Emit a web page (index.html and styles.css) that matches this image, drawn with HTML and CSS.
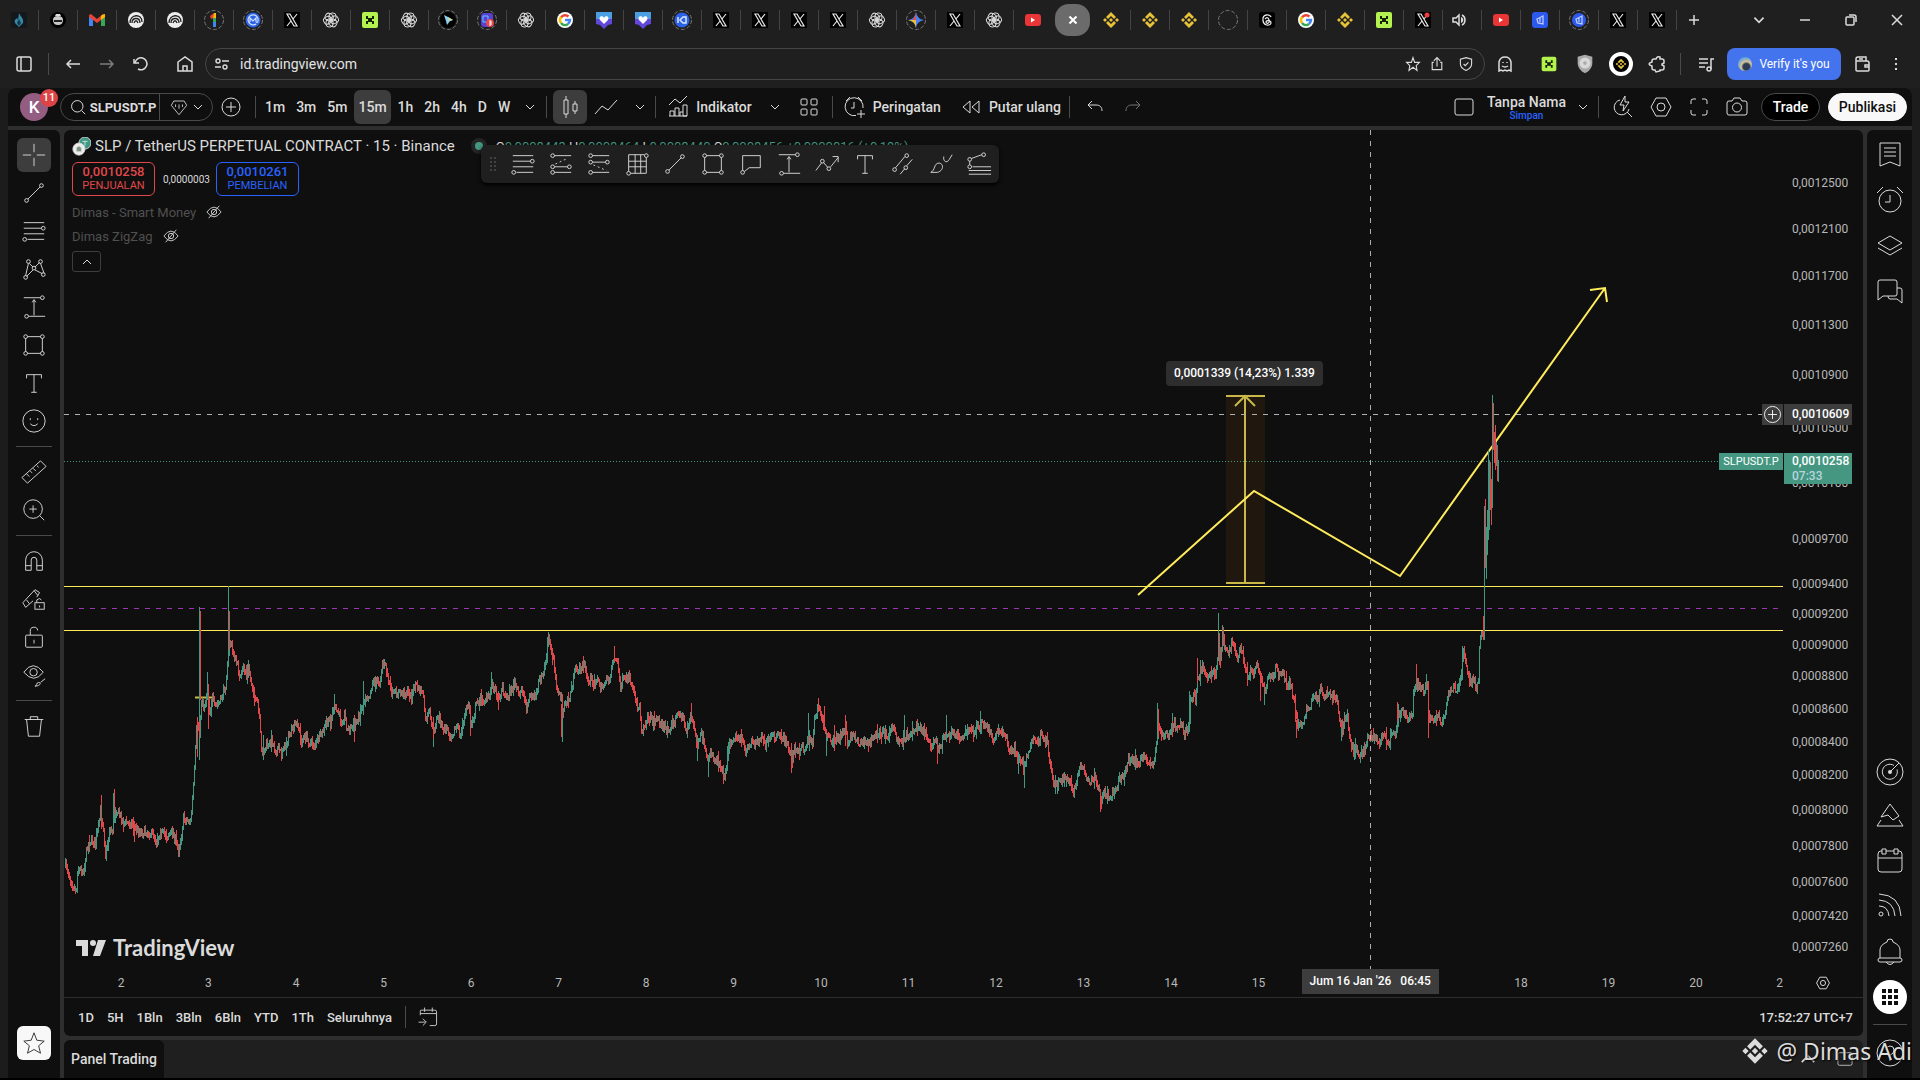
FILE: index.html
```html
<!DOCTYPE html>
<html lang="id">
<head>
  <meta charset="UTF-8">
  <meta name="viewport" content="width=device-width, initial-scale=1.0">
  <title>SLPUSDT.P - TradingView</title>
  <link rel="stylesheet" href="styles.css">
</head>
<body>

  <!-- Icon library -->
  <svg class="icon-library" aria-hidden="true">
    <!-- Tab icons, 24x24 -->
    <symbol id="flame" viewBox="0 0 24 24"><rect x="4" y="4" width="16" height="16" fill="#15181b"/><path d="M12 5c1 3 5 5 4 10l-4 4-4-4c-1-3 1-4 2-5l1 2z" fill="#3487a5"/><path d="M12 11l2 4-2 3-2-3z" fill="#14384c"/></symbol>
    <symbol id="robot" viewBox="0 0 24 24"><circle cx="12" cy="12" r="8" fill="#000"/><path d="M7 12q0-4 5-4t5 4q0 5-5 5t-5-5" fill="#c9c9c9"/><path d="M8 12h8v2H8z" fill="#222"/><path d="M9 8l1-2h4l1 2z" fill="#ddd"/></symbol>
    <symbol id="gmail" viewBox="0 0 24 24"><path d="M4 8v10h4v-7z" fill="#4285f4"/><path d="M20 8v10h-4v-7z" fill="#34a853"/><path d="M4 7l2-1 6 5 6-5 2 1v2l-8 6-8-6z" fill="#ea4335"/><path d="M17 7l3-1v3l-4 3V8z" fill="#fbbc04"/></symbol>
    <symbol id="arcs" viewBox="0 0 24 24"><circle cx="12" cy="12" r="8" fill="#eee"/><path d="M6 15c0-9 12-10 12-1M8 15c0-6 8-6 8 0M10 15c1-3 3-3 4 0" fill="none" stroke="#222" stroke-width="1.3"/></symbol>
    <symbol id="ring" viewBox="0 0 24 24"><circle cx="12" cy="12" r="9.500" fill="none" stroke="#777" stroke-dasharray="4 2"/></symbol>
    <symbol id="one" viewBox="0 0 24 24"><use href="#ring"/><path d="M8 8l4-3v5l-3 1z" fill="#ea4335"/><path d="M12 5h2v6h-3z" fill="#fbbc04"/><path d="M11 10h3v4h-3z" fill="#34a853"/><path d="M11 14h3v5h-3z" fill="#4285f4"/></symbol>
    <symbol id="cmc" viewBox="0 0 24 24"><use href="#ring"/><circle cx="12" cy="12" r="7.500" fill="#2e63e8"/><path d="M9 14v-4l3 3 3-3v3c0 2 2 2 2 0a5 5 0 1 0-2 3" fill="none" stroke="#cfe0ff" stroke-width="1.200"/></symbol>
    <symbol id="x" viewBox="0 0 24 24"><rect x="4" y="4" width="16" height="16" fill="#000"/><path d="M7 6h3l7 12h-3zM17 6l-4 5M7 18l4-5" fill="none" stroke="#e8e8e8" stroke-width="1.200"/></symbol>
    <symbol id="x-live" viewBox="0 0 24 24"><use href="#x"/><circle cx="16" cy="7" r="2.500" fill="#ef3b3b"/></symbol>
    <symbol id="petal" viewBox="0 0 24 24"><rect x="10" y="5" width="7" height="8" rx="3" fill="none" stroke="#d8d8d8"/></symbol>
    <symbol id="openai" viewBox="0 0 24 24"><use href="#petal"/><use href="#petal" transform="rotate(60 12 12)"/><use href="#petal" transform="rotate(120 12 12)"/><use href="#petal" transform="rotate(180 12 12)"/><use href="#petal" transform="rotate(240 12 12)"/><use href="#petal" transform="rotate(300 12 12)"/></symbol>
    <symbol id="greenx" viewBox="0 0 24 24"><rect x="4" y="4" width="16" height="16" rx="2" fill="#b4f34f"/><path d="M8 8h2v2h4V8h2v3h-2v2h2v3h-2v-2h-4v2H8v-3h2v-2H8z" fill="#16210a"/></symbol>
    <symbol id="star4" viewBox="0 0 24 24"><use href="#ring"/><circle cx="12" cy="12" r="8" fill="#000"/><path d="M8 7l4 2 5 3-3 1-3 4-1-4z" fill="#8ad0ee"/><path d="M12 9l5 3-4 1z" fill="#d3dc9a"/></symbol>
    <symbol id="badge3" viewBox="0 0 24 24"><use href="#ring"/><rect x="6" y="5" width="12" height="14" rx="3" fill="#5a3fd0"/><path d="M8 8h5v6H8z" fill="none" stroke="#59d0ff"/><circle cx="15" cy="15" r="4" fill="#e5484d"/><path d="M14 13h2v4h-2M14 15h2" fill="none" stroke="#fff"/></symbol>
    <symbol id="google" viewBox="0 0 24 24"><circle cx="12" cy="12" r="8" fill="#fff"/><g fill="none" stroke-width="2.500"><path d="M8 9.500A5 5 0 0 1 15.500 8.500" stroke="#ea4335"/><path d="M8 9a5 5 0 0 0 0 6" stroke="#fbbc04"/><path d="M8 15a5 5 0 0 0 7 1" stroke="#34a853"/><path d="M12 12h5c0 2-1 3-2 4" stroke="#4285f4"/></g></symbol>
    <symbol id="heart" viewBox="0 0 24 24"><path d="M4 6h16v10l-4 1-4 4-4-4-4-1z" fill="#6247dc"/><path d="M4 4h16v7H4z" fill="#4b9ee0"/><path d="M12 16l-4-4c-2-4 3-5 4-2 1-3 6-2 4 2z" fill="#fff"/></symbol>
    <symbol id="cam" viewBox="0 0 24 24"><use href="#ring"/><circle cx="12" cy="12" r="7.500" fill="#2c62e8"/><path d="M8 9v6M10 12l3-3h3v6h-3z" fill="none" stroke="#dbe6ff" stroke-width="1.500"/></symbol>
    <symbol id="gemini" viewBox="0 0 24 24"><use href="#ring"/><path d="M12 4q1 7 8 8-7 1-8 8-1-7-8-8 7-1 8-8" fill="#4c82ef"/><path d="M12 4v8H9q3-4 3-8" fill="#e6493f"/><path d="M4 12h8v8q-1-7-8-8" fill="#e7bd3b"/></symbol>
    <symbol id="youtube" viewBox="0 0 24 24"><rect x="4" y="6" width="16" height="12" rx="3" fill="#e93535"/><path d="M10 9.500v5l4-2.500z" fill="#fff"/></symbol>
    <symbol id="binance" viewBox="0 0 24 24"><path d="M12 4l5 5-2 2-3-3-3 3-2-2zM12 20l5-5-2-2-3 3-3-3-2 2zM6 10l2 2-2 2-2-2zM18 10l2 2-2 2-2-2zM12 10l2 2-2 2-2-2z" fill="currentColor"/></symbol>
    <symbol id="threads" viewBox="0 0 24 24"><rect x="4" y="4" width="16" height="16" rx="3" fill="#000"/><path d="M16 9c-1-3-7-3-8 1-1 9 8 8 8 5s-5-3-5-1 4 2 3-2-3-2-4-1" fill="none" stroke="#eee" stroke-width="1.200"/></symbol>
    <symbol id="audio" viewBox="0 0 24 24"><path d="M3 10h3l3-3v10l-3-3H3z" fill="none" stroke="#ddd" stroke-width="1.500"/><path d="M11 9v6c3-1 3-5 0-6" fill="#ddd"/><path d="M12 7c4 2 4 8 0 10" fill="none" stroke="#ddd" stroke-width="1.500"/></symbol>
    <symbol id="bluesq" viewBox="0 0 24 24"><rect x="4" y="4" width="16" height="16" rx="3" fill="#2d58ec"/><path d="M15 8l-6 3 1 4 5 1zM12 10v4" fill="none" stroke="#b9caff" stroke-width="1.300"/></symbol>
    <symbol id="bluecirc" viewBox="0 0 24 24"><use href="#ring"/><circle cx="12" cy="12" r="7" fill="#2d58ec"/><path d="M15 8l-6 3 1 4 5 1zM12 10v4" fill="none" stroke="#b9caff" stroke-width="1.300"/></symbol>

    <!-- Line icons, 28x28 -->
    <symbol id="chev" viewBox="0 0 14 14"><path d="M3 5l4 4 4-4"/></symbol>
    <symbol id="chev-up" viewBox="0 0 14 14"><path d="M3 9l4-4 4 4"/></symbol>
    <symbol id="search" viewBox="0 0 28 28"><circle cx="13" cy="13" r="8"/><path d="M19 19l5 5"/></symbol>
    <symbol id="gem" viewBox="0 0 28 28"><path d="M8 7h12l3 5-9 11-9-11zM10 11v3M14 11v5M18 11v3"/></symbol>
    <symbol id="plus-circle" viewBox="0 0 28 28"><circle cx="14" cy="14" r="9"/><path d="M14 9v10M9 14h10"/></symbol>
    <symbol id="candles" viewBox="0 0 28 28"><path d="M8 7h4v14H8zM10 3v4M10 21v4M17 11h4v7h-4zM19 8v3M19 18v3"/></symbol>
    <symbol id="line" viewBox="0 0 28 28"><path d="M3 21l7-8 6 4 9-10"/></symbol>
    <symbol id="indicator" viewBox="0 0 28 28"><path d="M5 12l6-6 5 4 7-7M6 23v-5h4v5M11 23v-8h4v8M16 23v-4h3M19 23V12h4v11zM5 23h18"/></symbol>
    <symbol id="layouts" viewBox="0 0 28 28"><rect x="6" y="6" width="6" height="6" rx="1"/><rect x="16" y="6" width="6" height="6" rx="1"/><rect x="6" y="16" width="6" height="6" rx="1"/><rect x="16" y="16" width="6" height="6" rx="1"/></symbol>
    <symbol id="alarm-plus" viewBox="0 0 28 28"><path d="M15 22.500A9 9 0 1 1 22 15M13 9v6h-3M5 8l4-4M17 4l4 4M20 17v8M16 21h8"/></symbol>
    <symbol id="rewind" viewBox="0 0 28 28"><path d="M13 8v12l-7-6zM22 8v12l-7-6z"/></symbol>
    <symbol id="undo" viewBox="0 0 28 28"><path d="M11 8l-4 4 4 4M7 12h8c4 0 6 2 6 6"/></symbol>
    <symbol id="redo" viewBox="0 0 28 28"><path d="M17 8l4 4-4 4M21 12h-8c-4 0-6 2-6 6"/></symbol>
    <symbol id="square" viewBox="0 0 28 28"><rect x="5" y="6" width="18" height="16" rx="2"/></symbol>
    <symbol id="flash" viewBox="0 0 28 28"><path d="M11 7a7.500 7.500 0 1 0 9 9M18 19l5 5M16 3l-5 9h4l-1 6 6-9h-4z"/></symbol>
    <symbol id="hexagon" viewBox="0 0 28 28"><path d="M9 5h10l5 9-5 9H9l-5-9z"/><circle cx="14" cy="14" r="4"/></symbol>
    <symbol id="full" viewBox="0 0 28 28"><path d="M6 11V8q0-2 2-2h3M17 6h3q2 0 2 2v3M22 17v3q0 2-2 2h-3M11 22H8q-2 0-2-2v-3"/></symbol>
    <symbol id="camera" viewBox="0 0 28 28"><path d="M6 8h3l2-3h6l2 3h3q2 0 2 2v10q0 2-2 2H6q-2 0-2-2V10q0-2 2-2z"/><circle cx="14" cy="14.500" r="4.500"/></symbol>
    <symbol id="cross" viewBox="0 0 28 28"><path d="M14 2v9M14 17v9M2 14h9M17 14h9"/></symbol>
    <symbol id="trend" viewBox="0 0 28 28"><path d="M7.500 20.500l13-13"/><circle cx="6" cy="22" r="2"/><circle cx="22" cy="6" r="2"/></symbol>
    <symbol id="fib" viewBox="0 0 28 28"><path d="M3 5h22M3 11h19M3 17h22M7 23h18"/><circle cx="24" cy="11" r="2"/><circle cx="4" cy="23" r="2"/></symbol>
    <symbol id="fib-ext" viewBox="0 0 28 28"><path d="M7 5h18M7 17h14M7 23h18"/><path d="M8 14l13-6" stroke-dasharray="2 3"/><circle cx="5" cy="5" r="2"/><circle cx="5" cy="17" r="2"/><circle cx="23" cy="17" r="2"/><circle cx="5" cy="23" r="2"/></symbol>
    <symbol id="fib-ret" viewBox="0 0 28 28"><path d="M7 5h18M7 12h14M7 23h18"/><path d="M8 15l14 6" stroke-dasharray="2 3"/><circle cx="5" cy="5" r="2"/><circle cx="5" cy="12" r="2"/><circle cx="23" cy="12" r="2"/><circle cx="5" cy="23" r="2"/></symbol>
    <symbol id="grid" viewBox="0 0 28 28"><path d="M5 22V4h17M12 4v20M18 4v20M24 7v17H7M5 11h19M5 17h19"/><circle cx="24" cy="5" r="2"/><circle cx="5" cy="24" r="2"/></symbol>
    <symbol id="pattern" viewBox="0 0 28 28"><path d="M5 21L8 8M9 8l4 4M15 12l5-5M21 8l4 11M6 22l7-7M15 15l8 4"/><circle cx="5" cy="23" r="2"/><circle cx="8" cy="6" r="2"/><circle cx="14" cy="13" r="2"/><circle cx="21" cy="6" r="2"/><circle cx="24" cy="20" r="2"/></symbol>
    <symbol id="range" viewBox="0 0 28 28"><path d="M3 4h18M8 24h18M14 23V7M12 9l2-3 2 3"/><circle cx="23" cy="4" r="2"/><circle cx="6" cy="24" r="2"/></symbol>
    <symbol id="rect" viewBox="0 0 28 28"><path d="M7 5h14M7 23h14M5 7v14M23 7v14"/><circle cx="5" cy="5" r="2"/><circle cx="23" cy="5" r="2"/><circle cx="5" cy="23" r="2"/><circle cx="23" cy="23" r="2"/></symbol>
    <symbol id="note" viewBox="0 0 28 28"><path d="M5 21V5h19v13H12l-5 4"/><circle cx="5" cy="23" r="2"/></symbol>
    <symbol id="zig" viewBox="0 0 28 28"><path d="M2 21l6-8M10 12l5 6M18 17l8-10M20 6h6v6"/><circle cx="9" cy="11" r="2"/><circle cx="16" cy="19" r="2"/></symbol>
    <symbol id="text" viewBox="0 0 28 28"><path d="M6 9V5h16v4M14 5v19M11 24h6"/></symbol>
    <symbol id="smile" viewBox="0 0 28 28"><circle cx="14" cy="14" r="12"/><path d="M10 17q4 4 8 0M10 11v2M18 11v2"/></symbol>
    <symbol id="channel" viewBox="0 0 28 28"><path d="M6 18L16 6M11 25l5-6M18 16l6-7"/><circle cx="5" cy="20" r="2"/><circle cx="18" cy="5" r="2"/><circle cx="17" cy="18" r="2"/></symbol>
    <symbol id="brush" viewBox="0 0 28 28"><path d="M3 23c5-2 3-10 9-10 6 1 4 9-2 10zM17 6c-1 5 3 8 6 3l3-5"/></symbol>
    <symbol id="fan" viewBox="0 0 28 28"><path d="M4 11v4M6 8l11-4M7 17h20M3 21h24M3 25h24"/><circle cx="4" cy="9" r="2"/><circle cx="19" cy="4" r="2"/><circle cx="4" cy="17" r="2"/></symbol>
    <symbol id="ruler" viewBox="0 0 28 28"><path d="M1 20L21 2l6 6L7 26zM6 16l3 3M10 13l2 2M13 10l3 3M17 7l2 2"/></symbol>
    <symbol id="zoom" viewBox="0 0 28 28"><circle cx="13" cy="13" r="10"/><path d="M20 20l5 5M13 9v8M9 13h8"/></symbol>
    <symbol id="magnet" viewBox="0 0 28 28"><path d="M5 24V13a9 9 0 0 1 18 0v11h-6V13a3 3 0 0 0-6 0v11zM5 19h6M17 19h6"/></symbol>
    <symbol id="pen-lock" viewBox="0 0 28 28"><path d="M2 18L15 4l5 3-3 5M2 18l3 5 8-7M6 15l3 4M14 5l4 5"/><rect x="15" y="18" width="10" height="7"/><path d="M17 18v-3q3-3 5 0M20 21v2"/></symbol>
    <symbol id="lock" viewBox="0 0 28 28"><rect x="5" y="12" width="18" height="13" rx="1"/><path d="M10 12V8a4 4 0 0 1 8-1M14 17v4"/></symbol>
    <symbol id="eye" viewBox="0 0 28 28"><path d="M3 11q10-14 21 0-10 13-21 0zM15 26c3 0 1-4 4-4s2 4-4 4M21 22l5-4"/><circle cx="13.500" cy="11" r="4"/></symbol>
    <symbol id="eye-off" viewBox="0 0 18 18"><path d="M1 9q8-11 16 0-8 11-16 0zM3 16L15 2"/><circle cx="9" cy="9" r="3"/></symbol>
    <symbol id="trash" viewBox="0 0 28 28"><path d="M4 7h20M10 7V4h8v3M6 7l2 18h12l2-18"/></symbol>
    <symbol id="star" viewBox="0 0 28 28"><path d="M14 3l3 8 8 1-6 5 2 8-7-4-7 4 2-8-6-5 8-1z"/></symbol>
    <symbol id="watch" viewBox="0 0 28 28"><path d="M4 3h20v23l-10-4-10 4zM8 8h12M8 12h12M8 16h12"/></symbol>
    <symbol id="alarm" viewBox="0 0 28 28"><circle cx="14" cy="15" r="11"/><path d="M14 9v7H9M1 7l6-6M21 1l6 6"/></symbol>
    <symbol id="layers" viewBox="0 0 28 28"><path d="M14 4l12 7-12 7-12-7zM2 16l12 7 12-7"/></symbol>
    <symbol id="chat" viewBox="0 0 28 28"><path d="M2 22V4q0-2 2-2h15q2 0 2 2v12q0 2-2 2H7zM21 10h3q2 0 2 2v13l-5-4h-7q-2 0-2-3"/></symbol>
    <symbol id="radar" viewBox="0 0 28 28"><circle cx="14" cy="14" r="13"/><path d="M18 7.500a7.500 7.500 0 1 0 3 4M14 14l9-9"/><circle cx="14" cy="14" r="2" fill="currentColor"/></symbol>
    <symbol id="pyramid" viewBox="0 0 28 28"><path d="M14 1l9 12-6 4-5-5-7 2zM5 17l-4 6h26l-4-6"/></symbol>
    <symbol id="calendar" viewBox="0 0 28 28"><rect x="2" y="3" width="24" height="21" rx="3"/><path d="M2 10h24"/><path d="M6 1h4v5H6zM18 1h4v5h-4z" fill="#0f0f0f"/></symbol>
    <symbol id="feed" viewBox="0 0 28 28"><path d="M3 1q21 1 22 22M3 7q15 1 16 16M3 13q9 0 10 10"/><circle cx="5" cy="21" r="2"/></symbol>
    <symbol id="bell" viewBox="0 0 28 28"><path d="M4 20v-8q0-5 7-8 0-3 3-3t3 3q7 3 7 8v8M10 24q4 5 8 0"/><rect x="2" y="20" width="24" height="4" rx="2"/></symbol>
    <symbol id="help" viewBox="0 0 28 28"><circle cx="14" cy="14" r="13"/><path d="M10 11q0-4 4-4t4 4-4 5v2M14 20v2"/></symbol>
    <symbol id="goto" viewBox="0 0 28 28"><path d="M5 12V7q0-1 1-1h16q2 0 2 2v14q0 2-2 2h-6M5 10h19M10 3v5M19 3v5M3 20h8M8 16l4 4-4 4"/></symbol>
    <symbol id="star-sm" viewBox="0 0 20 20"><path d="M10 2l2 6h6l-4 4 1 6-5-4-5 4 1-6-4-4h6z"/></symbol>
    <symbol id="sidebar" viewBox="0 0 20 20"><rect x="3" y="3" width="14" height="14" rx="2"/><path d="M7 3v14"/></symbol>
    <symbol id="back" viewBox="0 0 20 20"><path d="M17 10H4M8 6l-4 4 4 4"/></symbol>
    <symbol id="forward" viewBox="0 0 20 20"><path d="M3 10h13M12 6l4 4-4 4"/></symbol>
    <symbol id="reload" viewBox="0 0 20 20"><path d="M4 9a6 6 0 1 1 3 6M3 5v4h5"/></symbol>
    <symbol id="home" viewBox="0 0 20 20"><path d="M3 8l7-5 7 5v9H3zM8 17v-5h4v5"/></symbol>
    <symbol id="tune" viewBox="0 0 20 20"><circle cx="6" cy="7" r="2"/><circle cx="13" cy="13" r="2"/><path d="M10 7h7M3 13h6"/></symbol>
    <symbol id="share" viewBox="0 0 20 20"><path d="M6 8H4v9h12V8h-2M10 13V2M6 6l4-4 4 4"/></symbol>
    <symbol id="shield" viewBox="0 0 20 20"><path d="M10 2l7 2v6q0 5-7 8-7-3-7-8V4zM7 10l2 2 4-4"/></symbol>
    <symbol id="ghost" viewBox="0 0 20 20"><path d="M4 17V8q1-5 6-5t6 5v9l-2-1-2 1-2-1-2 1-2-1zM8 8v1M12 8v1M7 12q3 2 6 0"/></symbol>
    <symbol id="puzzle" viewBox="0 0 20 20"><path d="M7 5h2q1-3 4-2v2h2q2 0 2 2v2l-2 1v1l2 1v2q0 2-2 2h-2v1l-4 1-1-2H7q-2 0-2-2v-2q-3-1-3-2t3-2V7q0-2 2-2z"/></symbol>
    <symbol id="playlist" viewBox="0 0 20 20"><path d="M3 5h9M3 9h9M3 13h6M15 15V5h3"/><circle cx="13" cy="15" r="2"/></symbol>
    <symbol id="wallet" viewBox="0 0 20 20"><path d="M4 7V5q0-2 2-2h8v4M4 7h11q2 0 2 2v7q0 1-1 1H5q-1 0-1-1zM17 11h-4v2h4M7 5h4"/></symbol>
    <symbol id="dots" viewBox="0 0 20 20"><path d="M10 4v2M10 9v2M10 14v2" stroke-width="2"/></symbol>
    <symbol id="plus" viewBox="0 0 20 20"><path d="M10 5v10M5 10h10"/></symbol>
    <symbol id="minus" viewBox="0 0 20 20"><path d="M5 10h10"/></symbol>
    <symbol id="restore" viewBox="0 0 20 20"><rect x="5" y="7" width="8" height="8" rx="1"/><path d="M8 5h5q2 0 2 2v5"/></symbol>
    <symbol id="close" viewBox="0 0 20 20"><path d="M5 5l10 10M15 5L5 15"/></symbol>
  </svg>

  <!-- Browser tabs -->
  <div class="titlebar">
    <div class="tabs" id="tabs"></div>
    <button class="icon-btn new-tab" aria-label="New tab"><svg><use href="#plus"/></svg></button>
    <div class="window-controls">
      <button class="icon-btn" aria-label="Tabs"><svg class="tab-search"><use href="#chev"/></svg></button>
      <button class="icon-btn" aria-label="Minimize"><svg><use href="#minus"/></svg></button>
      <button class="icon-btn" aria-label="Restore"><svg><use href="#restore"/></svg></button>
      <button class="icon-btn" aria-label="Close"><svg><use href="#close"/></svg></button>
    </div>
  </div>

  <!-- Address bar -->
  <div class="navbar">
    <div class="nav-left">
      <button class="icon-btn" aria-label="Sidebar"><svg><use href="#sidebar"/></svg></button>
      <span class="divider"></span>
      <button class="icon-btn" aria-label="Back"><svg><use href="#back"/></svg></button>
      <button class="icon-btn dim" aria-label="Forward"><svg><use href="#forward"/></svg></button>
      <button class="icon-btn" aria-label="Reload"><svg><use href="#reload"/></svg></button>
      <button class="icon-btn home" aria-label="Home"><svg><use href="#home"/></svg></button>
    </div>
    <div class="address">
      <svg class="tune"><use href="#tune"/></svg>
      <input type="text" value="id.tradingview.com" aria-label="Address">
      <svg><use href="#star-sm"/></svg>
      <svg><use href="#share"/></svg>
      <svg class="brave-shield"><use href="#shield"/></svg>
    </div>
    <div class="extensions">
      <button class="icon-btn ghost" aria-label="Private"><svg><use href="#ghost"/></svg></button>
      <button class="icon-btn" aria-label="Green extension"><svg class="filled"><use href="#greenx"/></svg></button>
      <button class="icon-btn" aria-label="Shield extension"><svg class="filled" viewBox="0 0 24 24"><path d="M4 4l8-2 8 2v7c0 6-5 10-8 11-3-1-8-5-8-11z" fill="#aaa"/><circle cx="12" cy="11" r="6" fill="#d8d8d8"/><circle cx="12" cy="11" r="2" fill="#aaa"/></svg></button>
      <button class="icon-btn" aria-label="Binance wallet"><span class="wallet-ring"><svg><use href="#binance"/></svg></span></button>
      <button class="icon-btn" aria-label="Extensions"><svg><use href="#puzzle"/></svg></button>
    </div>
    <span class="divider"></span>
    <button class="icon-btn playlist" aria-label="Playlist"><svg><use href="#playlist"/></svg></button>
    <button class="verify-btn"><span class="verify-avatar"></span>Verify it's you</button>
    <button class="icon-btn wallet" aria-label="Wallet"><svg><use href="#wallet"/></svg></button>
    <button class="icon-btn menu" aria-label="Menu"><svg><use href="#dots"/></svg></button>
  </div>

  <div class="workspace">

    <!-- Top toolbar -->
    <header class="toolbar">
      <button class="avatar">K<span class="badge">11</span></button>
      <div class="symbol-box">
        <button class="symbol-search"><svg><use href="#search"/></svg>SLPUSDT.P</button>
        <button class="symbol-gem" aria-label="Symbol list"><svg><use href="#gem"/></svg><svg class="chev"><use href="#chev"/></svg></button>
      </div>
      <button class="tool compare" aria-label="Compare"><svg><use href="#plus-circle"/></svg></button>
      <span class="divider"></span>
      <div class="intervals">
        <button>1m</button><button>3m</button><button>5m</button><button class="active">15m</button><button>1h</button><button>2h</button><button>4h</button><button>D</button><button>W</button>
      </div>
      <button class="tool more" aria-label="More intervals"><svg class="chev"><use href="#chev"/></svg></button>
      <span class="divider"></span>
      <button class="tool active candle-btn" aria-label="Candles"><svg><use href="#candles"/></svg></button>
      <button class="tool line-btn" aria-label="Line"><svg><use href="#line"/></svg></button>
      <button class="tool narrow" aria-label="Chart types"><svg class="chev"><use href="#chev"/></svg></button>
      <span class="divider"></span>
      <button class="tool labelled"><svg><use href="#indicator"/></svg>Indikator</button>
      <button class="tool narrow" aria-label="Favourite indicators"><svg class="chev"><use href="#chev"/></svg></button>
      <button class="tool templates" aria-label="Templates"><svg><use href="#layouts"/></svg></button>
      <span class="divider"></span>
      <button class="tool labelled"><svg><use href="#alarm-plus"/></svg>Peringatan</button>
      <button class="tool labelled"><svg><use href="#rewind"/></svg>Putar ulang</button>
      <span class="divider"></span>
      <button class="tool undo-btn" aria-label="Undo"><svg><use href="#undo"/></svg></button>
      <button class="tool dim" aria-label="Redo"><svg><use href="#redo"/></svg></button>
      <span class="spacer"></span>
      <button class="tool" aria-label="Layout"><svg><use href="#square"/></svg></button>
      <button class="layout-name">Tanpa Nama<small>Simpan</small></button>
      <button class="tool chevron-tool" aria-label="Layouts"><svg class="chev"><use href="#chev"/></svg></button>
      <span class="divider"></span>
      <button class="tool" aria-label="Quick search"><svg><use href="#flash"/></svg></button>
      <button class="tool" aria-label="Settings"><svg><use href="#hexagon"/></svg></button>
      <button class="tool" aria-label="Fullscreen"><svg><use href="#full"/></svg></button>
      <button class="tool" aria-label="Snapshot"><svg><use href="#camera"/></svg></button>
      <button class="pill">Trade</button>
      <button class="pill light">Publikasi</button>
    </header>

    <!-- Drawing tools -->
    <nav class="drawing-bar">
      <button class="active" aria-label="Cross"><svg><use href="#cross"/></svg></button>
      <button aria-label="Trend line"><svg><use href="#trend"/></svg></button>
      <button aria-label="Fibonacci"><svg><use href="#fib"/></svg></button>
      <button aria-label="Patterns"><svg><use href="#pattern"/></svg></button>
      <button aria-label="Prediction"><svg><use href="#range"/></svg></button>
      <button aria-label="Shapes"><svg><use href="#rect"/></svg></button>
      <button aria-label="Text"><svg><use href="#text"/></svg></button>
      <button aria-label="Icons"><svg><use href="#smile"/></svg></button>
      <hr>
      <button aria-label="Measure"><svg><use href="#ruler"/></svg></button>
      <button aria-label="Zoom"><svg><use href="#zoom"/></svg></button>
      <hr>
      <button aria-label="Magnet"><svg><use href="#magnet"/></svg></button>
      <button aria-label="Stay in drawing mode"><svg><use href="#pen-lock"/></svg></button>
      <button aria-label="Lock"><svg><use href="#lock"/></svg></button>
      <button aria-label="Hide"><svg><use href="#eye"/></svg></button>
      <hr>
      <button aria-label="Remove"><svg><use href="#trash"/></svg></button>
      <span class="spacer"></span>
      <button class="favorite" aria-label="Favorites"><svg><use href="#star"/></svg></button>
    </nav>

    <!-- Chart -->
    <main class="chart">
      <div class="plot">
        <svg class="plot-canvas" viewBox="64 130 1719 839" preserveAspectRatio="none">
          <rect class="range-fill" x="1226" y="396" width="39" height="187"/>
          <path class="level" d="M64 586.500H1783M64 630.500H1783"/>
          <path class="mid-level" d="M68 608.500H1778"/>
          <path class="last-price" d="M64 461.500H1720"/>
          <path class="range-line" d="M1226 396H1265M1226 583H1265M1245 583V396M1235 406L1245 396L1255 406"/>
          <path class="forecast" d="M1138 595L1254 491L1400 576L1605 288M1590 290L1605 288L1607 302"/>
          <path class="mark" d="M195 697.500H212"/>
          <path class="up" id="upBars"/>
          <path class="down" id="downBars"/>
          <path class="crosshair" d="M64 414.500H1762M1370.500 130V969"/>
        </svg>

        <div class="legend">
          <div class="legend-title">
            <svg class="coin" viewBox="0 0 22 22"><circle cx="15" cy="7" r="7" fill="#3e9884"/><path d="M12 5h6M15 5v5" stroke="#d8eee8"/><circle cx="8" cy="14" r="7" fill="#eee"/><path d="M5 17v-4q3-5 6 0v4z" fill="#7d9580"/></svg>
            <h1>SLP / TetherUS PERPETUAL CONTRACT · 15 · Binance</h1>
            <span class="status"></span>
            <span class="ohlc">O<i>0,0008443</i> H<i>0,0008464</i> L<i>0,0008440</i> C<i>0,0008456</i> <i>+0,0000016 (+0,19%)</i></span>
          </div>
          <div class="quotes">
            <button class="quote sell"><b>0,0010258</b>PENJUALAN</button>
            <span class="spread">0,0000003</span>
            <button class="quote buy"><b>0,0010261</b>PEMBELIAN</button>
          </div>
          <div class="study">Dimas - Smart Money <svg><use href="#eye-off"/></svg></div>
          <div class="study">Dimas ZigZag <svg><use href="#eye-off"/></svg></div>
          <button class="collapse" aria-label="Collapse"><svg class="chev"><use href="#chev-up"/></svg></button>
        </div>

        <div class="favorites-bar">
          <svg class="grip" viewBox="0 0 8 14"><path d="M1 1h2M5 1h2M1 5h2M5 5h2M1 9h2M5 9h2M1 13h2M5 13h2"/></svg>
          <button aria-label="Fib retracement"><svg><use href="#fib"/></svg></button>
          <button aria-label="Fib extension"><svg><use href="#fib-ext"/></svg></button>
          <button aria-label="Fib channel"><svg><use href="#fib-ret"/></svg></button>
          <button aria-label="Gann box"><svg><use href="#grid"/></svg></button>
          <button aria-label="Trend line"><svg><use href="#trend"/></svg></button>
          <button aria-label="Rectangle"><svg><use href="#rect"/></svg></button>
          <button aria-label="Callout"><svg><use href="#note"/></svg></button>
          <button aria-label="Price range"><svg><use href="#range"/></svg></button>
          <button aria-label="Path"><svg><use href="#zig"/></svg></button>
          <button aria-label="Text"><svg><use href="#text"/></svg></button>
          <button aria-label="Channel"><svg><use href="#channel"/></svg></button>
          <button aria-label="Brush"><svg><use href="#brush"/></svg></button>
          <button aria-label="Fan"><svg><use href="#fan"/></svg></button>
        </div>

        <div class="range-label">0,0001339 (14,23%) 1.339</div>
        <button class="add-alert" aria-label="Add alert"><svg><use href="#plus-circle"/></svg></button>
        <div class="symbol-tag">SLPUSDT.P</div>
        <div class="brand">
          <svg viewBox="0 0 30 16"><path d="M0 0h12v16H6V6H0zM22 0h8l-6 16h-7z" fill="currentColor"/><circle cx="17" cy="3" r="3" fill="currentColor"/></svg>
          TradingView
        </div>
      </div>

      <div class="price-axis" id="priceAxis">
        <div class="price-tag cross-tag">0,0010609</div>
        <div class="price-tag last-tag">0,0010258<span>07:33</span></div>
      </div>

      <div class="time-axis" id="timeAxis">
        <div class="time-tag">Jum 16 Jan '26 &nbsp; 06:45</div>
      </div>
      <button class="axis-settings" aria-label="Axis settings"><svg><use href="#hexagon"/></svg></button>

      <div class="ranges">
        <button>1D</button><button>5H</button><button>1Bln</button><button>3Bln</button><button>6Bln</button><button>YTD</button><button>1Th</button><button>Seluruhnya</button>
        <span class="divider"></span>
        <button class="goto" aria-label="Go to date"><svg><use href="#goto"/></svg></button>
        <span class="spacer"></span>
        <button>17:52:27 UTC+7</button>
      </div>
    </main>

    <!-- Right rail -->
    <aside class="side-rail">
      <div class="rail-top">
        <button aria-label="Watchlist"><svg><use href="#watch"/></svg></button>
        <button aria-label="Alerts"><svg><use href="#alarm"/></svg></button>
        <button aria-label="Object tree"><svg><use href="#layers"/></svg></button>
        <button aria-label="Chat"><svg><use href="#chat"/></svg></button>
      </div>
      <span class="spacer"></span>
      <button aria-label="Screeners"><svg><use href="#radar"/></svg></button>
      <button aria-label="Pine"><svg><use href="#pyramid"/></svg></button>
      <button aria-label="Calendar"><svg><use href="#calendar"/></svg></button>
      <button aria-label="News"><svg><use href="#feed"/></svg></button>
      <button aria-label="Notifications"><svg><use href="#bell"/></svg></button>
      <button aria-label="Products"><span class="apps"><svg viewBox="0 0 18 18"><path d="M1 3h4M7 3h4M13 3h4M1 9h4M7 9h4M13 9h4M1 15h4M7 15h4M13 15h4"/></svg></span></button>
      <hr>
      <button aria-label="Help"><svg><use href="#help"/></svg></button>
    </aside>

    <!-- Bottom panel -->
    <footer class="bottom-panel">
      <button class="panel-tab">Panel Trading</button>
      <span class="spacer"></span>
      <button class="panel-icon" aria-label="Expand"><svg><use href="#chev-up"/></svg></button>
      <button class="panel-icon" aria-label="Maximize"><svg><use href="#square"/></svg></button>
    </footer>

    <div class="watermark"><svg><use href="#binance"/></svg>@ Dimas Adi</div>
  </div>

  <script>
    // Browser tabs
    const tabs = [
      'flame', 'robot', 'gmail', 'arcs', 'arcs', 'one', 'cmc', 'x', 'openai', 'greenx', 'openai', 'star4', 'badge3',
      'openai', 'google', 'heart', 'heart', 'cam', 'x', 'x', 'x', 'x', 'openai', 'gemini', 'x', 'openai', 'youtube',
      'active', 'binance', 'binance', 'binance', 'ring', 'threads', 'google', 'binance', 'greenx', 'x-live', 'audio',
      'youtube', 'bluesq', 'bluecirc', 'x', 'x'
    ];
    document.getElementById('tabs').innerHTML = tabs.map(name => name === 'active'
      ? '<button class="tab active" aria-label="Close tab"><svg><use href="#close"/></svg></button>'
      : `<button class="tab" aria-label="${name}"><svg><use href="#${name}"/></svg></button>`
    ).join('');

    // Price axis: label and its y in chart units
    const prices = [
      ['0,0012500', 183], ['0,0012100', 229], ['0,0011700', 276], ['0,0011300', 325], ['0,0010900', 375],
      ['0,0010500', 428], ['0,0010100', 483], ['0,0009700', 539], ['0,0009400', 584], ['0,0009200', 614],
      ['0,0009000', 645], ['0,0008800', 676], ['0,0008600', 709], ['0,0008400', 742], ['0,0008200', 775],
      ['0,0008000', 810], ['0,0007800', 846], ['0,0007600', 882], ['0,0007420', 916], ['0,0007260', 947]
    ];
    document.getElementById('priceAxis').insertAdjacentHTML('afterbegin', prices.map(([label, y]) =>
      `<span style="top: ${(y - 130) / 8.39}%">${label}</span>`).join(''));

    // Time axis
    let days = '';
    for (let day = 2; day <= 20; day++) {
      if (day === 16 || day === 17) continue;
      days += `<span style="left: ${(121 + (day - 2) * 87.5 - 64) / 17.19}%">${day}</span>`;
    }
    days += '<span style="left: 99.8%">2</span>';
    document.getElementById('timeAxis').insertAdjacentHTML('afterbegin', days);

    // Price path: x, y pairs
    const path = [
      66,865, 70,880, 74,888, 76,890, 77,870, 83,870, 85,858, 87,846, 89,841, 95,841, 98,827, 100,812, 103,827, 105,855,
      107,847, 109,830, 112,830, 114,815, 116,810, 118,813, 124,823, 131,823, 137,831, 146,832, 153,835, 156,842, 159,833,
      167,835, 171,832, 174,838, 178,850, 181,835, 183,818, 190,822, 192,800, 194,770, 196,730, 198,727, 199,735, 201,700,
      203,707, 205,703, 207,685, 209,713, 212,698, 214,707, 219,703, 222,695, 225,685, 227,667, 229,640, 231,647, 234,657,
      237,667, 240,678, 243,668, 246,675, 248,670, 252,687, 255,702, 257,703, 259,720, 261,750, 263,752, 266,745, 268,747,
      271,739, 275,750, 278,748, 281,755, 283,745, 285,747, 288,737, 294,727, 297,723, 301,742, 305,737, 309,742, 314,745,
      319,737, 322,733, 326,723, 330,722, 333,708, 338,713, 341,722, 344,715, 347,730, 351,727, 355,723, 358,717, 362,705,
      365,697, 369,695, 372,682, 379,682, 382,663, 386,668, 388,682, 392,695, 397,693, 406,692, 411,697, 415,683, 418,690,
      421,690, 423,700, 425,720, 429,713, 433,733, 436,720, 439,717, 442,730, 446,728, 450,735, 454,730, 457,727, 460,738,
      463,720, 468,703, 470,723, 473,718, 475,707, 478,700, 485,700, 489,697, 491,683, 494,688, 498,698, 502,687, 505,698,
      510,692, 514,683, 519,697, 521,687, 526,707, 529,698, 537,693, 538,683, 543,673, 546,657, 548,637, 551,655, 553,657,
      555,677, 558,695, 561,698, 562,713, 565,705, 569,698, 572,685, 575,670, 584,666, 588,683, 590,677, 592,685, 596,678,
      601,690, 605,680, 608,682, 612,662, 614,657, 617,663, 620,685, 624,680, 628,678, 632,690, 635,697, 637,712, 639,703,
      641,730, 645,723, 648,717, 653,720, 656,718, 661,725, 667,730, 673,723, 679,712, 683,720, 686,732, 690,715, 694,730,
      697,747, 701,733, 704,750, 707,763, 710,750, 713,758, 717,760, 721,767, 724,777, 726,763, 728,747, 732,738, 741,737,
      745,755, 751,740, 754,745, 759,738, 763,735, 765,747, 768,740, 773,737, 783,738, 788,747, 792,758, 794,750, 798,753,
      801,745, 804,750, 809,737, 812,743, 814,720, 818,707, 822,720, 826,733, 830,743, 836,738, 841,737, 845,725, 847,743,
      852,733, 858,742, 869,743, 877,733, 888,733, 892,728, 897,740, 902,742, 906,735, 912,733, 918,724, 926,735, 930,745,
      935,740, 938,750, 942,740, 949,735, 955,733, 961,737, 967,732, 975,730, 981,725, 988,728, 992,743, 996,733, 1004,732,
      1008,750, 1014,752, 1018,760, 1024,763, 1028,753, 1033,737, 1036,743, 1040,737, 1047,743, 1050,765, 1053,783,
      1059,782, 1065,777, 1069,783, 1073,795, 1076,780, 1080,767, 1084,770, 1086,783, 1090,783, 1094,777, 1098,790,
      1101,800, 1104,793, 1109,797, 1113,792, 1118,783, 1124,773, 1128,760, 1133,762, 1139,762, 1144,757, 1149,765,
      1154,760, 1156,743, 1158,727, 1162,735, 1169,735, 1174,723, 1177,728, 1181,723, 1184,735, 1188,727, 1190,703,
      1193,693, 1195,702, 1197,680, 1201,667, 1203,668, 1207,682, 1213,670, 1215,677, 1217,660, 1218,640, 1220,660,
      1222,637, 1224,645, 1228,653, 1232,642, 1234,650, 1237,660, 1240,648, 1243,658, 1247,678, 1251,670, 1253,672,
      1257,663, 1260,673, 1262,687, 1265,693, 1267,677, 1272,677, 1275,667, 1278,677, 1282,672, 1286,685, 1288,682,
      1292,693, 1295,710, 1297,728, 1300,723, 1304,718, 1306,707, 1309,712, 1312,695, 1317,700, 1320,688, 1323,693,
      1328,697, 1336,697, 1338,712, 1342,732, 1344,720, 1347,717, 1350,742, 1353,752, 1357,748, 1359,758, 1363,752,
      1367,740, 1371,734, 1376,738, 1379,743, 1382,733, 1385,738, 1388,743, 1392,733, 1395,733, 1397,717, 1402,708,
      1406,717, 1412,717, 1413,690, 1417,682, 1420,685, 1423,690, 1427,685, 1428,710, 1429,720, 1432,717, 1434,723,
      1437,715, 1442,723, 1445,710, 1448,690, 1453,690, 1458,688, 1461,673, 1463,653, 1466,667, 1469,682, 1473,680,
      1476,690, 1478,677, 1479,650, 1481,633, 1483,632
    ];

    // Long bars: x, top, bottom
    const upSpikes = [
      113,793,827, 199,607,760, 228,586,656, 207,672,693, 263,735,760, 363,681,710, 334,694,713, 433,725,747, 491,672,695,
      562,707,742, 548,632,640, 697,735,761, 708,755,777, 808,713,742, 826,733,756, 904,715,740, 946,715,738, 980,711,730,
      1024,763,788, 1018,752,774, 1157,703,735, 1172,713,725, 1218,613,657, 1222,625,643, 1189,691,732, 1264,682,705,
      1341,720,741, 1426,674,690, 1462,646,680, 1484,506,640, 1486,527,579, 1487,510,555, 1488,450,540, 1489,460,530,
      1492,395,508, 1496,442,466, 1498,460,482
    ];
    const downSpikes = [
      101,795,820, 114,789,815, 134,821,842, 197,717,757, 200,611,700, 208,685,729, 229,611,650, 354,715,742, 470,705,736,
      498,693,710, 561,704,737, 614,646,662, 691,703,720, 723,767,784, 791,757,773, 818,698,712, 824,706,727, 834,725,751,
      845,715,746, 937,745,764, 1100,793,812, 1158,709,737, 1197,658,683, 1219,633,665, 1223,627,646, 1260,672,701,
      1296,720,738, 1397,702,721, 1416,664,690, 1428,707,738, 1483,616,640, 1485,499,568, 1490,462,510, 1491,479,525,
      1493,403,450, 1494,432,463, 1495,425,470, 1497,445,481
    ];

    let seed = 7;
    function random() {
      seed = (seed * 16807) % 2147483647;
      return seed / 2147483647;
    }

    function bar(x, top, bottom) {
      return `M${x + 0.5} ${Math.round(top)}V${Math.round(bottom)}`;
    }

    // Draw one bar per column
    function drawBars() {
      let up = '', down = '';
      let last = path[1];
      let i = 0;
      for (let x = 65; x <= 1483; x++) {
        while (i < path.length - 4 && path[i + 2] <= x) i += 2;
        const t = Math.max(0, Math.min(1, (x - path[i]) / (path[i + 2] - path[i])));
        const y = path[i + 1] + (path[i + 3] - path[i + 1]) * t + (random() - 0.5) * 8;
        const wick = random() > 0.85 ? 8 : 3;
        const top = Math.min(y, last) - 1 - random() * wick;
        const bottom = Math.max(y, last) + 1 + random() * wick;
        if (y < last) up += bar(x, top, bottom);
        else down += bar(x, top, bottom);
        last = y;
      }
      for (let k = 0; k < upSpikes.length; k += 3) up += bar(upSpikes[k], upSpikes[k + 1], upSpikes[k + 2]);
      for (let k = 0; k < downSpikes.length; k += 3) down += bar(downSpikes[k], downSpikes[k + 1], downSpikes[k + 2]);
      document.getElementById('upBars').setAttribute('d', up);
      document.getElementById('downBars').setAttribute('d', down);
    }

    drawBars();
  </script>

</body>
</html>
```
FILE: styles.css
```css
/* General Styling */
* {
  box-sizing: border-box;
}

body {
  margin: 0;
  height: 100vh;
  display: flex;
  flex-direction: column;
  background-color: #1c1c1c;
  border-bottom: 2px solid #000;
  color: #dbdbdb;
  font-family: Roboto, "Noto Sans", sans-serif;
  font-size: 14px;
  overflow: hidden;
}

button {
  display: flex;
  align-items: center;
  justify-content: center;
  padding: 0;
  border: none;
  background: none;
  color: inherit;
  font: inherit;
  white-space: nowrap;
  cursor: pointer;
}

svg {
  flex: none;
  width: 28px;
  height: 28px;
  fill: none;
  stroke: currentColor;
}

symbol [fill="currentColor"],
.filled,
.tab svg {
  stroke: none;
}

hr {
  width: 36px;
  margin: 6px 0;
  border: none;
  border-top: 1px solid #4a4a4a;
}

.icon-library {
  position: absolute;
  width: 0;
  height: 0;
}

.divider {
  flex: none;
  width: 1px;
  height: 22px;
  background-color: #4a4a4a;
}

.spacer {
  flex: 1;
}

.dim {
  opacity: 0.5;
}

svg.chev {
  width: 14px;
  height: 14px;
}

/* Browser Tabs */
.titlebar {
  flex: none;
  display: flex;
  align-items: center;
  height: 40px;
  background-color: #1f1f1f;
}

.tabs {
  display: flex;
  align-items: center;
}

.tab {
  width: 39px;
  height: 20px;
  border-right: 1px solid #444;
}

.tab svg {
  width: 24px;
  height: 24px;
  color: #e6c23a;
}

.tab.active {
  width: 35px;
  height: 32px;
  margin: 0 2px;
  border: none;
  border-radius: 14px;
  background-color: #6b6b6b;
}

.tab.active svg {
  width: 14px;
  height: 14px;
  stroke: #fff;
  stroke-width: 3;
}

.tab:has(+ .active) {
  border-color: transparent;
}

.icon-btn {
  width: 34px;
  height: 32px;
}

.icon-btn svg {
  width: 20px;
  height: 20px;
  stroke-width: 1.5;
}

.icon-btn .tab-search {
  width: 16px;
  height: 16px;
}

.window-controls {
  display: flex;
  gap: 12px;
  margin-left: auto;
  padding-right: 6px;
}

/* Address Bar */
.navbar {
  flex: none;
  display: flex;
  align-items: center;
  height: 48px;
  background-color: #1f1f1f;
}

.nav-left {
  display: flex;
  align-items: center;
  padding: 0 3px 0 7px;
}

.nav-left .divider {
  margin: 0 7px;
}

.nav-left .home {
  margin-left: 10px;
}

.address {
  flex: 1;
  display: flex;
  align-items: center;
  height: 32px;
  gap: 8px;
  padding: 0 10px 0 6px;
  border: 1px solid #454545;
  border-radius: 16px;
}

.address svg {
  width: 16px;
  height: 16px;
  stroke-width: 1.4;
}

.address .tune {
  width: 20px;
  height: 20px;
}

.address .brave-shield {
  margin-left: 5px;
}

.address input {
  flex: 1;
  padding: 0;
  border: none;
  outline: none;
  background: none;
  color: #e3e3e3;
  font: inherit;
}

.extensions {
  display: flex;
  gap: 2px;
  padding: 0 6px 0 3px;
}

.extensions .ghost {
  margin-right: 8px;
}

.wallet-ring {
  display: flex;
  align-items: center;
  justify-content: center;
  width: 24px;
  height: 24px;
  border: 4px solid #fff;
  border-radius: 12px;
  background-color: #000;
  color: #e6c23a;
}

.wallet-ring svg {
  width: 16px;
  height: 16px;
}

.icon-btn .filled {
  width: 22px;
  height: 22px;
}

.playlist {
  margin: 0 4px 0 8px;
}

.verify-btn {
  gap: 7px;
  width: 114px;
  height: 32px;
  border-radius: 8px;
  background-color: #4473ee;
  color: #fff;
  font-size: 12px;
}

.verify-avatar {
  width: 14px;
  height: 14px;
  border-radius: 7px;
  background: radial-gradient(circle at 60% 70%, #2c3e55 25%, #d8c49b 40%, #5aa0e0 75%);
}

.wallet {
  margin-left: 4px;
}

.menu {
  margin-right: 7px;
}

/* Workspace */
.workspace {
  flex: 1;
  position: relative;
  min-height: 0;
  margin: 0 8px;
  display: grid;
  grid-template-columns: 52px 1fr 45px;
  grid-template-rows: 38px 1fr 38px;
  gap: 4px;
  border-radius: 8px 8px 0 0;
  background-color: #2e2e2e;
  overflow: hidden;
}

/* Top Toolbar */
.toolbar {
  grid-column: 1 / -1;
  display: flex;
  align-items: center;
  padding: 0 5px 0 12px;
  background-color: #0f0f0f;
  font-weight: 500;
}

.avatar {
  position: relative;
  width: 28px;
  height: 28px;
  border-radius: 14px;
  background-color: #935d82;
  color: #fff;
  font-size: 17px;
}

.badge {
  position: absolute;
  top: -4px;
  right: -10px;
  width: 18px;
  height: 18px;
  border-radius: 9px;
  background-color: #dc4446;
  font-size: 11px;
  line-height: 18px;
}

.symbol-box {
  display: flex;
  width: 153px;
  height: 28px;
  margin-left: 12px;
  border: 1px solid #4a4a4a;
  border-radius: 14px;
}

.symbol-search {
  flex: 1;
  gap: 2px;
  padding-left: 4px;
  font-size: 13px;
  font-weight: 700;
  border-right: 1px solid #4a4a4a;
}

.symbol-search svg {
  width: 20px;
  height: 20px;
  stroke-width: 1.4;
}

.symbol-gem {
  width: 52px;
}

.symbol-gem svg:first-child {
  width: 24px;
  height: 24px;
}

.tool {
  width: 38px;
  height: 34px;
  border-radius: 6px;
}

.tool.active {
  background-color: #3d3d3d;
}

.compare {
  width: 36px;
  margin-right: 6px;
}

.intervals {
  display: flex;
  gap: 3px;
  padding-left: 5px;
}

.intervals button {
  height: 34px;
  padding: 0 4px;
  border-radius: 6px;
}

.intervals .active {
  background-color: #3d3d3d;
}

.tool.more {
  width: 32px;
}

.tool.candle-btn {
  width: 34px;
  margin-left: 6px;
}

.tool.narrow {
  width: 20px;
  margin: 0 5px;
}

.tool.templates {
  margin-right: 4px;
}

.tool.labelled {
  gap: 4px;
  width: auto;
  padding: 0 8px;
}

.tool.undo-btn {
  margin-left: 6px;
}

.layout-name {
  flex-direction: column;
  padding: 2px 2px 0 4px;
  line-height: 15px;
}

.layout-name small {
  color: #2962ff;
  font-size: 10px;
  line-height: 11px;
}

.tool.chevron-tool {
  width: 30px;
}

.chevron-tool + .divider {
  margin-right: 5px;
}

.pill {
  width: 59px;
  height: 28px;
  margin-left: 5px;
  border: 1px solid #4a4a4a;
  border-radius: 14px;
  background-color: #000;
  color: #fff;
}

.pill.light {
  width: 79px;
  margin-left: 8px;
  border-color: #f8f8f8;
  background-color: #f8f8f8;
  color: #0f0f0f;
}

/* Drawing Tools */
.drawing-bar {
  grid-row: 2 / 4;
  display: flex;
  flex-direction: column;
  align-items: center;
  padding: 6px 0 18px;
  border-radius: 0 6px 0 0;
  background-color: #0f0f0f;
}

.drawing-bar button {
  width: 34px;
  height: 34px;
  margin: 2px 0;
  border-radius: 6px;
}

.drawing-bar svg {
  width: 26px;
  height: 26px;
}

.drawing-bar .active {
  background-color: #3d3d3d;
}

.drawing-bar .favorite {
  margin: 0;
  background-color: #f8f8f8;
  color: #2e2e2e;
}

/* Chart */
.chart {
  display: grid;
  grid-template-columns: 1fr 80px;
  grid-template-rows: 1fr 28px 39px;
  min-width: 0;
  border-radius: 6px;
  background-color: #0f0f0f;
}

.plot {
  position: relative;
}

.plot-canvas {
  position: absolute;
  width: 100%;
  height: 100%;
}

.plot-canvas path {
  vector-effect: non-scaling-stroke;
}

.up {
  stroke: #459782;
}

.down {
  stroke: #e0484b;
}

.level {
  stroke: #ffeb5b;
}

.mid-level {
  stroke: #9c36b5;
  stroke-dasharray: 5 6;
}

.last-price {
  stroke: #459782;
  stroke-dasharray: 1 2;
}

.crosshair {
  stroke: #b0b0b0;
  stroke-dasharray: 5 6;
}

.range-fill {
  fill: #20180f;
  stroke: none;
}

.range-line {
  stroke: #c9b848;
  stroke-width: 2;
}

.forecast {
  stroke: #ffeb5b;
  stroke-width: 2;
}

.mark {
  stroke: #cbb93c;
  stroke-width: 2;
}

/* Legend */
.legend {
  position: absolute;
  top: 5px;
  left: 8px;
}

.legend-title {
  display: flex;
  align-items: center;
  height: 22px;
}

.coin {
  width: 19px;
  height: 19px;
}

h1 {
  margin: 0 0 0 4px;
  font-size: 15px;
  font-weight: 400;
}

.status {
  width: 8px;
  height: 8px;
  margin: 0 13px 0 20px;
  border: none;
  border-radius: 4px;
  background-color: #459782;
  box-shadow: 0 0 0 4px #242424;
}

.ohlc {
  font-size: 13px;
}

.ohlc i {
  color: #459782;
  font-style: normal;
}

.quotes {
  display: flex;
  align-items: center;
  gap: 8px;
  margin: 5px 0 4px;
}

.quote {
  flex-direction: column;
  width: 83px;
  height: 34px;
  border: 1px solid;
  border-radius: 6px;
  font-size: 11px;
  line-height: 14px;
}

.quote b {
  font-size: 13px;
  font-weight: 500;
}

.sell {
  color: #e0484b;
}

.buy {
  color: #2962ff;
}

.spread {
  width: 45px;
  font-size: 10px;
  text-align: center;
}

.study {
  display: flex;
  align-items: center;
  gap: 10px;
  height: 24px;
  color: #505050;
  font-size: 13px;
}

.study svg {
  width: 16px;
  height: 16px;
  color: #dbdbdb;
}

.collapse {
  width: 29px;
  height: 21px;
  margin-top: 3px;
  border: 1px solid #3d3d3d;
  border-radius: 3px;
}

/* Favorites Bar */
.favorites-bar {
  position: absolute;
  top: 15px;
  left: 417px;
  display: flex;
  align-items: center;
  height: 38px;
  padding: 0 1px 0 8px;
  border-radius: 6px;
  background-color: #1f1f1f;
  box-shadow: 0 2px 4px #000;
}

.favorites-bar button {
  width: 38px;
  height: 38px;
}

.favorites-bar button svg {
  width: 26px;
  height: 26px;
}

.grip {
  width: 8px;
  height: 14px;
  margin-right: 7px;
  color: #666;
}

.range-label {
  position: absolute;
  left: 64.1%;
  top: 27.5%;
  padding: 0 8px;
  border-radius: 4px;
  background-color: #2e2e2e;
  color: #fff;
  font-size: 12px;
  font-weight: 500;
  line-height: 25px;
}

.add-alert {
  position: absolute;
  right: 0;
  top: 32.7%;
  width: 21px;
  height: 21px;
  background-color: #3d3d3d;
  color: #fff;
}

.add-alert svg {
  width: 25px;
  height: 25px;
}

.symbol-tag {
  position: absolute;
  right: 0;
  top: 38.5%;
  width: 64px;
  background-color: #459782;
  color: #fff;
  font-size: 11px;
  line-height: 17px;
  text-align: center;
}

.brand {
  position: absolute;
  left: 12px;
  bottom: 8px;
  display: flex;
  align-items: center;
  gap: 7px;
  font-family: Lato, sans-serif;
  font-size: 22px;
  font-weight: 700;
}

.brand svg {
  width: 30px;
  height: 16px;
  stroke: none;
}

/* Axes */
.price-axis {
  position: relative;
  color: #b8b8b8;
  font-size: 12px;
}

.price-axis > span {
  position: absolute;
  left: 9px;
  line-height: 16px;
  margin-top: -8px;
}

.price-tag {
  position: absolute;
  left: 1px;
  width: 68px;
  padding-left: 8px;
  color: #fff;
  font-weight: 500;
}

.cross-tag {
  top: 32.7%;
  background-color: #3d3d3d;
  line-height: 21px;
}

.last-tag {
  top: 38.5%;
  padding-top: 1px;
  background-color: #459782;
  line-height: 15px;
}

.last-tag span {
  display: block;
  color: #b5d6dd;
}

.time-axis {
  position: relative;
  color: #b8b8b8;
  font-size: 12px;
}

.time-axis > span {
  position: absolute;
  top: 6px;
  width: 20px;
  margin-left: -10px;
  line-height: 16px;
  text-align: center;
}

.time-tag {
  position: absolute;
  left: 72%;
  top: 0;
  width: 137px;
  background-color: #3d3d3d;
  color: #fff;
  font-weight: 500;
  line-height: 25px;
  text-align: center;
}

.axis-settings svg {
  width: 18px;
  height: 18px;
  stroke-width: 1.5;
}

.ranges {
  grid-column: 1 / -1;
  display: flex;
  align-items: center;
  gap: 13px;
  padding: 0 10px 0 14px;
  border-top: 1px solid #2e2e2e;
  font-size: 13px;
  font-weight: 500;
}

.ranges .goto {
  margin-left: -3px;
}

.goto svg {
  width: 24px;
  height: 24px;
}

/* Right Rail */
.side-rail {
  grid-row: 2 / 4;
  grid-column: 3;
  display: flex;
  flex-direction: column;
  align-items: center;
  padding: 1px 0 3px;
  border-radius: 6px 0 0 0;
  background-color: #0f0f0f;
}

.side-rail button {
  height: 45px;
}

.side-rail .rail-top button {
  height: 46px;
}

.side-rail hr {
  width: 34px;
  margin: 5px 0;
}

.apps {
  display: flex;
  align-items: center;
  justify-content: center;
  width: 34px;
  height: 34px;
  border-radius: 17px;
  background-color: #fff;
  color: #0f0f0f;
}

.apps svg {
  width: 18px;
  height: 18px;
  stroke-width: 4;
}

/* Bottom Panel */
.bottom-panel {
  display: flex;
  grid-column: 2;
  border-radius: 6px 6px 0 0;
  background-color: #1f1f1f;
}

.panel-tab {
  width: 100px;
  border-radius: 6px 6px 0 0;
  background-color: #0f0f0f;
  font-weight: 500;
}

.panel-icon {
  width: 37px;
}

.panel-icon svg {
  width: 22px;
  height: 22px;
}

.watermark {
  position: absolute;
  right: 0;
  bottom: 8px;
  display: flex;
  align-items: center;
  gap: 2px;
  color: #dcdcdc;
  font-family: "Noto Sans", sans-serif;
  font-size: 23px;
  line-height: 32px;
  text-shadow: 1px 1px 2px #000;
}

.watermark svg {
  width: 38px;
  height: 38px;
}
```
